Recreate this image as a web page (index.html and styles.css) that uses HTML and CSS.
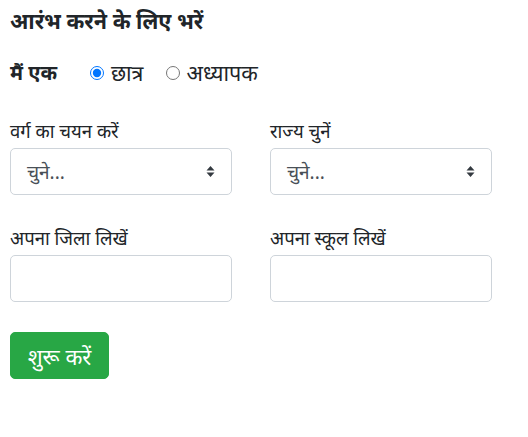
FILE: index.html
```html
<!DOCTYPE html>
<html lang="hi">
<head>
<meta charset="utf-8">
<link rel="stylesheet" href="styles.css">
</head>
<body>
<form class="form">
  <h1 class="title">आरंभ करने के लिए भरें</h1>
  <div class="role">
    <span class="role-label">मैं एक</span>
    <label class="radio"><input type="radio" name="role" checked> छात्र</label>
    <label class="radio"><input type="radio" name="role"> अध्यापक</label>
  </div>
  <div class="grid">
    <div class="field">
      <label class="label">वर्ग का चयन करें</label>
      <div class="select">चुने...
        <svg class="caret" width="9" height="13" viewBox="0 0 9 13"><path d="M4.5 1 L8.5 5.5 H0.5 Z M4.5 12 L0.5 7.5 H8.5 Z" fill="#343a40"/></svg>
      </div>
    </div>
    <div class="field">
      <label class="label">राज्य चुनें</label>
      <div class="select">चुने...
        <svg class="caret" width="9" height="13" viewBox="0 0 9 13"><path d="M4.5 1 L8.5 5.5 H0.5 Z M4.5 12 L0.5 7.5 H8.5 Z" fill="#343a40"/></svg>
      </div>
    </div>
    <div class="field">
      <label class="label">अपना जिला लिखें</label>
      <div class="input"></div>
    </div>
    <div class="field">
      <label class="label">अपना स्कूल लिखें</label>
      <div class="input"></div>
    </div>
  </div>
  <button type="button" class="btn">शुरू करें</button>
</form>
</body>
</html>
```
FILE: styles.css
```css
* { box-sizing: border-box; }
html, body { margin: 0; background: #fff; }
body {
  font-family: "Noto Sans", "Liberation Sans", sans-serif;
  color: #212529;
  font-size: 19px;
}
.form { padding: 6px 10px 0 10px; }
.title {
  font-size: 21.5px;
  font-weight: bold;
  margin: 0;
  line-height: 30px;
}
.role {
  display: flex;
  align-items: center;
  margin-top: 22px;
  line-height: 30px;
}
.role-label { font-weight: bold; font-size: 20px; margin-right: 33px; }
.radio { display: flex; align-items: center; margin-right: 22px; font-size: 21.5px; }
.radio input { margin: 0 7px 0 0; width: 14px; height: 14px; }
.grid {
  display: grid;
  grid-template-columns: 222px 222px;
  column-gap: 38px;
  row-gap: 28px;
  margin-top: 28px;
}
.label { display: block; line-height: 30px; margin-bottom: 2px; font-size: 18.5px; }
.select, .input {
  height: 47px;
  border: 1px solid #ced4da;
  border-radius: 5px;
  display: flex;
  align-items: center;
  padding: 0 16px;
  color: #495057;
}
.select { justify-content: space-between; }
.btn {
  margin-top: 30px;
  background: #28a745;
  border: 1px solid #28a745;
  color: #fff;
  font: inherit;
  font-size: 22px;
  border-radius: 5px;
  height: 47px;
  width: 99px;
  padding: 0;
}
```
